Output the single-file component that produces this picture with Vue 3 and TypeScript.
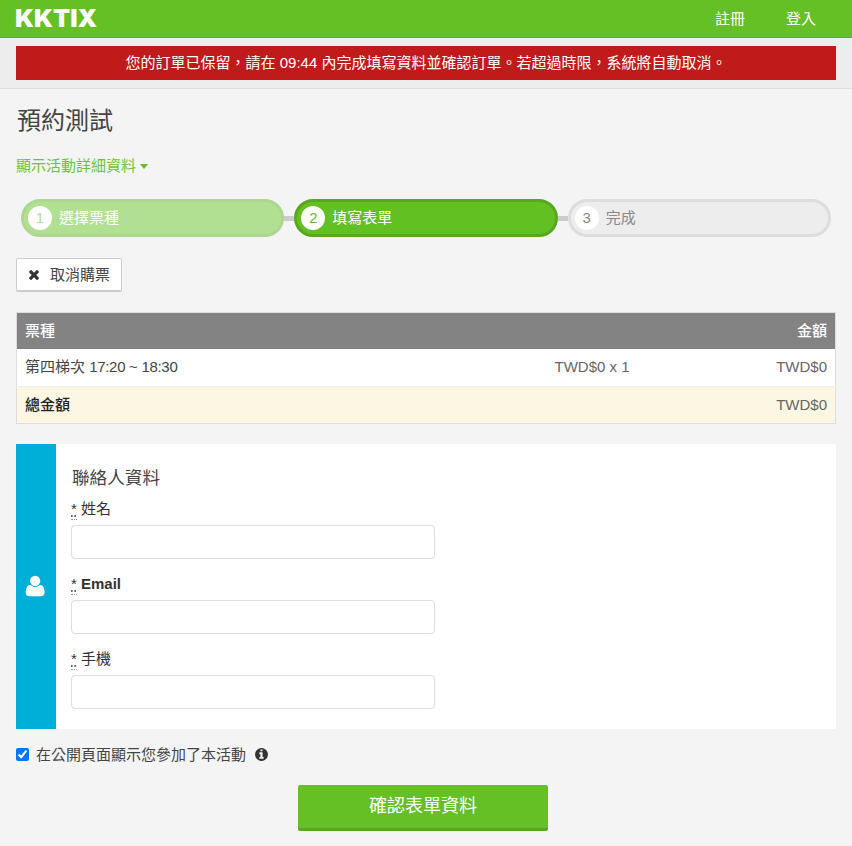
<script setup lang="ts">
interface Step { n: number; label: string; state: string }
interface Field { label: string; latin: boolean }

const steps: Step[] = [
  { n: 1, label: '選擇票種', state: 'done' },
  { n: 2, label: '填寫表單', state: 'active' },
  { n: 3, label: '完成', state: 'todo' },
]
const fields: Field[] = [
  { label: '姓名', latin: false },
  { label: 'Email', latin: true },
  { label: '手機', latin: false },
]
</script>

<template>
  <div class="page">
    <header class="nav">
      <span class="logo">KKTIX</span>
      <nav class="nav-links">
        <a>註冊</a>
        <a>登入</a>
      </nav>
    </header>

    <div class="notice-bar">
      <div class="alert">您的訂單已保留&#xFF0C;請在 09:44 內完成填寫資料並確認訂單。若超過時限&#xFF0C;系統將自動取消。</div>
    </div>

    <main class="content">
      <h1 class="title">預約測試</h1>
      <a class="detail-link">顯示活動詳細資料<span class="caret"></span></a>

      <ol class="steps">
        <template v-for="(s, i) in steps" :key="s.n">
          <li v-if="i > 0" class="connector" aria-hidden="true"></li>
          <li class="step" :class="s.state">
            <span class="num">{{ s.n }}</span>
            <span>{{ s.label }}</span>
          </li>
        </template>
      </ol>

      <button class="cancel" type="button">
        <svg class="x" viewBox="0 0 1408 1792" aria-hidden="true">
          <path d="M1298 1322q0 40-28 68l-136 136q-28 28-68 28t-68-28l-294-294-294 294q-28 28-68 28t-68-28l-136-136q-28-28-28-68t28-68l294-294-294-294q-28-28-28-68t28-68l136-136q28-28 68-28t68 28l294 294 294-294q28-28 68-28t68 28l136 136q28 28 28 68t-28 68l-294 294 294 294q28 28 28 68z" />
        </svg>
        <span>取消購票</span>
      </button>

      <table class="tickets">
        <colgroup>
          <col class="c1" />
          <col class="c2" />
          <col />
        </colgroup>
        <thead>
          <tr>
            <th>票種</th>
            <th></th>
            <th class="right">金額</th>
          </tr>
        </thead>
        <tbody>
          <tr class="row">
            <td class="name">第四梯次 <span class="time">17:20 ~ 18:30</span></td>
            <td>TWD$0 x 1</td>
            <td class="right">TWD$0</td>
          </tr>
          <tr class="total">
            <td class="strong">總金額</td>
            <td></td>
            <td class="right">TWD$0</td>
          </tr>
        </tbody>
      </table>

      <section class="card">
        <div class="side">
          <svg class="user" viewBox="0 0 1792 1792" aria-hidden="true">
            <path d="M1536 1399q0 120-73 189.500t-194 69.500h-874q-121 0-194-69.500t-73-189.500q0-53 3.500-103.500t14-109 26.500-108.500 43-97.500 62-81 85.500-53.500 111.500-20q9 0 42 21.500t74.500 48 108 48 133.500 21.500 133.500-21.500 108-48 74.500-48 42-21.500q61 0 111.500 20t85.500 53.500 62 81 43 97.500 26.500 108.500 14 109 3.500 103.500zm-320-893q0 159-112.500 271.500t-271.500 112.500-271.500-112.500-112.500-271.500 112.500-271.500 271.500-112.500 271.500 112.500 112.500 271.500z" />
          </svg>
        </div>
        <div class="form">
          <h2 class="form-title">聯絡人資料</h2>
          <div v-for="f in fields" :key="f.label" class="field">
            <label class="label" :class="{ latin: f.latin }"><abbr title="必填">*</abbr> {{ f.label }}</label>
            <input class="input" type="text" />
          </div>
        </div>
      </section>

      <label class="public">
        <input type="checkbox" checked />
        <span>在公開頁面顯示您參加了本活動</span>
        <svg class="info" viewBox="0 0 1792 1792" aria-hidden="true">
          <path d="M1152 1376v-160q0-14-9-23t-23-9h-96v-512q0-14-9-23t-23-9h-320q-14 0-23 9t-9 23v160q0 14 9 23t23 9h96v320h-96q-14 0-23 9t-9 23v160q0 14 9 23t23 9h448q14 0 23-9t9-23zm-128-896v-160q0-14-9-23t-23-9h-192q-14 0-23 9t-9 23v160q0 14 9 23t23 9h192q14 0 23-9t9-23zm640 416q0 209-103 385.500t-279.500 279.500-385.500 103-385.500-103-279.500-279.500-103-385.500 103-385.500 279.500-279.500 385.500-103 385.500 103 279.500 279.500 103 385.500z" />
        </svg>
      </label>

      <div class="submit-wrap">
        <button class="submit" type="button">確認表單資料</button>
      </div>
    </main>
  </div>
</template>

<style>
html, body { margin: 0; background: #f4f4f4; }
</style>

<style scoped>
.page {
  height: 846px;
  overflow: hidden;
  font-family: "Liberation Sans", "Noto Sans CJK TC", sans-serif;
  font-size: 15px;
  line-height: 20px;
  color: #333;
  background: #f4f4f4;
}
.nav {
  height: 37px;
  display: flex;
  align-items: center;
  justify-content: space-between;
  padding: 0 36px 0 16px;
  background: #64c024;
  border-bottom: 1px solid #5aab20;
}
.logo {
  margin: -2px 0 0 -1px;
  font-family: Inter, "Liberation Sans", sans-serif;
  font-weight: 900;
  font-size: 25px;
  line-height: 18px;
  color: #fff;
}
.nav-links { display: flex; gap: 41px; color: #fff; }
.notice-bar {
  padding: 8px 16px;
  background: #ededed;
  border-bottom: 1px solid #ddd;
}
.alert {
  height: 34px;
  line-height: 33px;
  text-align: center;
  color: #fff;
  background: #c11a1b;
}
.content { padding: 0 16px; }
.title {
  margin: 0;
  padding: 16px 1px 0;
  font-size: 24px;
  line-height: 32px;
  font-weight: 400;
  color: #444;
}
.detail-link {
  display: block;
  margin-top: 19px;
  color: #6cc433;
}
.caret {
  display: inline-block;
  margin-left: 4px;
  vertical-align: 2px;
  border-left: 4.5px solid transparent;
  border-right: 4.5px solid transparent;
  border-top: 5px solid #63c023;
}
.steps {
  list-style: none;
  display: flex;
  align-items: center;
  margin: 23px 0 0;
  padding: 0 5px;
}
.connector {
  width: 10px;
  height: 5px;
  background: #ccc;
}
.step {
  flex: 1;
  box-sizing: border-box;
  height: 38px;
  display: flex;
  align-items: center;
  gap: 7px;
  padding: 0 4px;
  border: 3px solid;
  border-radius: 19px;
}
.num {
  width: 24px;
  height: 24px;
  border-radius: 50%;
  background: #fff;
  text-align: center;
  line-height: 24px;
}
.done { background: #b2e092; border-color: #add690; color: #fff; }
.done .num { color: #b2e092; }
.active { background: #63c023; border-color: #57a81f; color: #fff; }
.active .num { color: #63c023; }
.todo { background: #ededed; border-color: #ddd; color: #888; }
.todo .num { color: #888; }
.cancel {
  display: flex;
  align-items: center;
  gap: 10px;
  box-sizing: border-box;
  width: 106px;
  height: 34px;
  margin-top: 21px;
  padding: 0 11px;
  font: inherit;
  color: #444;
  white-space: nowrap;
  background: #fff;
  border: 1px solid #ccc;
  border-bottom-width: 2px;
  border-radius: 2px;
}
.x { flex: none; width: 12px; height: 15px; fill: #333; }
.tickets {
  width: 100%;
  margin-top: 20px;
  border-collapse: collapse;
  table-layout: fixed;
  border: 1px solid #ddd;
}
.c1 { width: 530px; }
.c2 { width: 130px; }
.tickets th {
  height: 36px;
  padding: 0 8px;
  text-align: left;
  font-weight: 500;
  color: #fff;
  background: #838383;
}
.tickets td {
  height: 37px;
  padding: 0 8px;
  box-sizing: border-box;
  color: #666;
}
.tickets .right { text-align: right; }
.row { background: #fff; border-bottom: 1px solid #eee; }
.tickets .row .name { color: #444; }
.time { letter-spacing: -0.3px; }
.total { background: #fdf6e2; }
.tickets .total .strong { color: #222; font-weight: 500; }
.card {
  display: flex;
  height: 285px;
  margin-top: 20px;
  background: #fff;
}
.side {
  width: 40px;
  display: flex;
  align-items: center;
  justify-content: center;
  background: #00afd8;
}
.user { width: 24px; height: 24px; fill: #fff; }
.form { padding: 22px 0 0 15px; }
.form-title {
  margin: 0 0 9px;
  padding-left: 1px;
  font-size: 17.6px;
  line-height: 24px;
  font-weight: 400;
  color: #444;
}
.field { margin-bottom: 15px; }
.label {
  display: block;
  height: 26px;
  line-height: 20px;
  color: #333;
}
.label.latin { font-weight: 700; }
abbr {
  font-weight: 400;
  cursor: help;
  padding-bottom: 2px;
  border-bottom: 1px dotted #999;
  text-underline-offset: 2px;
}
.input {
  display: block;
  box-sizing: border-box;
  width: 364px;
  height: 34px;
  padding: 4px 8px;
  font: inherit;
  background: #fff;
  border: 1px solid #ddd;
  border-radius: 4px;
}
.public {
  display: flex;
  align-items: center;
  margin-top: 16px;
  height: 20px;
  color: #444;
}
.public input { margin: 0 7px 0 0; width: 13px; height: 13px; }
.info { width: 15px; height: 15px; margin-left: 8px; fill: #333; }
.submit-wrap {
  display: flex;
  justify-content: center;
  margin-top: 20px;
  padding-right: 6px;
}
.submit {
  width: 250px;
  height: 46px;
  font: inherit;
  font-size: 18px;
  color: #fff;
  background: #64c024;
  border: 0;
  border-bottom: 3px solid #57a81f;
  border-radius: 2px;
}
</style>
